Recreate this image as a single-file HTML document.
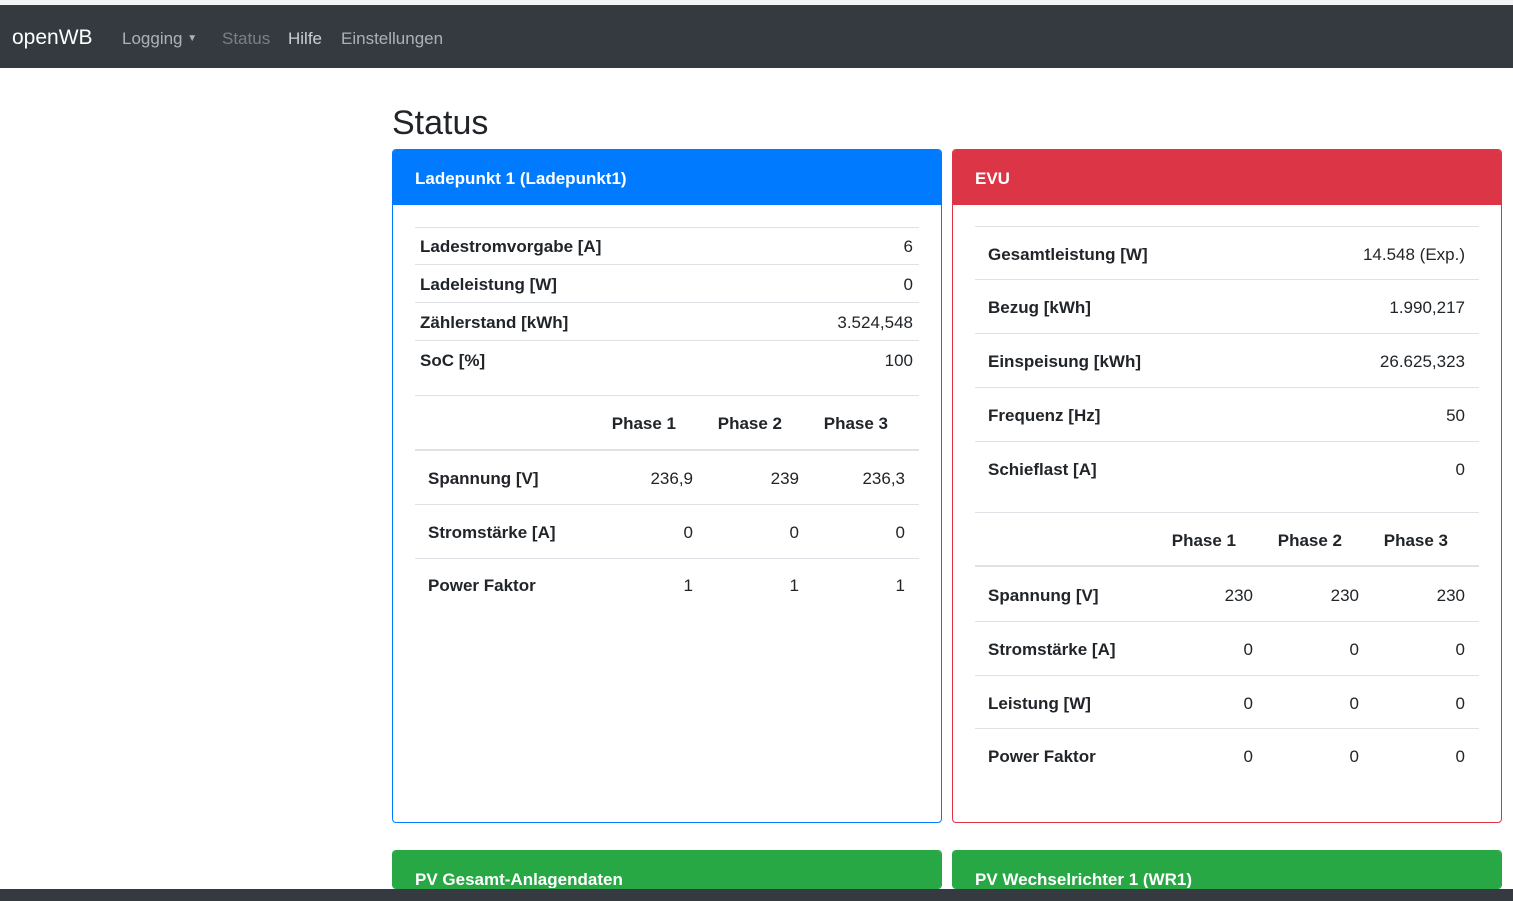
<!DOCTYPE html><html><head><meta charset="utf-8"><style>
*{box-sizing:border-box;margin:0;padding:0}
html,body{width:1513px;height:901px;overflow:hidden}
body{background:#fff;font-family:"Liberation Sans",sans-serif;color:#212529;position:relative;font-size:17px}
.a{position:absolute;white-space:nowrap;margin-top:1px}
.nav{position:absolute;left:0;top:5px;width:1513px;height:63px;background:#343a40}
.card{position:absolute;border:1px solid;border-radius:4px;overflow:hidden}
.hd{position:absolute;left:0;top:0;right:0;height:55px;color:#fff;font-weight:bold;font-size:17px;padding:19px 0 0 22px}
.ln{position:absolute;height:1px;background:#dee2e6}
.b{font-weight:bold}
.r{text-align:right}
</style></head><body>
<div style="position:absolute;left:0;top:0;width:1513px;height:5px;background:#f3f3f5"></div>
<div class="nav">
<span class="a" style="left:12px;top:20px;font-size:21px;color:#fff">openWB</span>
<span class="a" style="left:122px;top:23px;font-size:17px;color:rgba(255,255,255,.6)">Logging <span style="font-size:10px;position:relative;top:-3px">▼</span></span>
<span class="a" style="left:222px;top:23px;font-size:17px;color:rgba(255,255,255,.35)">Status</span>
<span class="a" style="left:288px;top:23px;font-size:17px;color:rgba(255,255,255,.75)">Hilfe</span>
<span class="a" style="left:341px;top:23px;font-size:17px;color:rgba(255,255,255,.6)">Einstellungen</span>
</div>
<span class="a" style="left:392px;top:103px;font-size:34px;font-weight:500">Status</span>

<div class="card" style="left:392px;top:149px;width:550px;height:674px;border-color:#007bff"><div class="hd" style="background:#007bff">Ladepunkt 1 (Ladepunkt1)</div></div>
<div class="card" style="left:952px;top:149px;width:550px;height:674px;border-color:#dc3545"><div class="hd" style="background:#dc3545">EVU</div></div>
<div class="card" style="left:392px;top:850px;width:550px;height:39px;border-color:#28a745"><div class="hd" style="background:#28a745">PV Gesamt-Anlagendaten</div></div>
<div class="card" style="left:952px;top:850px;width:550px;height:39px;border-color:#28a745"><div class="hd" style="background:#28a745">PV Wechselrichter 1 (WR1)</div></div>
<div style="position:absolute;left:0;top:889px;width:1513px;height:12px;background:#343a40"></div>

<div class="ln" style="left:415px;top:227px;width:504px"></div>
<div class="ln" style="left:415px;top:264px;width:504px"></div>
<div class="ln" style="left:415px;top:302px;width:504px"></div>
<div class="ln" style="left:415px;top:340px;width:504px"></div>
<span class="a b" style="left:420px;top:236px">Ladestromvorgabe [A]</span><span class="a r" style="right:600px;top:236px">6</span>
<span class="a b" style="left:420px;top:274px">Ladeleistung [W]</span><span class="a r" style="right:600px;top:274px">0</span>
<span class="a b" style="left:420px;top:312px">Zählerstand [kWh]</span><span class="a r" style="right:600px;top:312px">3.524,548</span>
<span class="a b" style="left:420px;top:350px">SoC [%]</span><span class="a r" style="right:600px;top:350px">100</span>
<div class="ln" style="left:415px;top:395px;width:504px"></div>
<div class="ln" style="left:415px;top:449px;width:504px;height:2px"></div>
<div class="ln" style="left:415px;top:504px;width:504px"></div>
<div class="ln" style="left:415px;top:558px;width:504px"></div>
<span class="a b" style="right:837px;top:413px">Phase 1</span><span class="a b" style="right:731px;top:413px">Phase 2</span><span class="a b" style="right:625px;top:413px">Phase 3</span>
<span class="a b" style="left:428px;top:468px">Spannung [V]</span><span class="a" style="right:820px;top:468px">236,9</span><span class="a" style="right:714px;top:468px">239</span><span class="a" style="right:608px;top:468px">236,3</span>
<span class="a b" style="left:428px;top:522px">Stromstärke [A]</span><span class="a" style="right:820px;top:522px">0</span><span class="a" style="right:714px;top:522px">0</span><span class="a" style="right:608px;top:522px">0</span>
<span class="a b" style="left:428px;top:575px">Power Faktor</span><span class="a" style="right:820px;top:575px">1</span><span class="a" style="right:714px;top:575px">1</span><span class="a" style="right:608px;top:575px">1</span>

<div class="ln" style="left:975px;top:226px;width:504px"></div>
<div class="ln" style="left:975px;top:279px;width:504px"></div>
<div class="ln" style="left:975px;top:333px;width:504px"></div>
<div class="ln" style="left:975px;top:387px;width:504px"></div>
<div class="ln" style="left:975px;top:441px;width:504px"></div>
<span class="a b" style="left:988px;top:244px">Gesamtleistung [W]</span><span class="a" style="right:48px;top:244px">14.548 (Exp.)</span>
<span class="a b" style="left:988px;top:297px">Bezug [kWh]</span><span class="a" style="right:48px;top:297px">1.990,217</span>
<span class="a b" style="left:988px;top:351px">Einspeisung [kWh]</span><span class="a" style="right:48px;top:351px">26.625,323</span>
<span class="a b" style="left:988px;top:405px">Frequenz [Hz]</span><span class="a" style="right:48px;top:405px">50</span>
<span class="a b" style="left:988px;top:459px">Schieflast [A]</span><span class="a" style="right:48px;top:459px">0</span>
<div class="ln" style="left:975px;top:512px;width:504px"></div>
<div class="ln" style="left:975px;top:565px;width:504px;height:2px"></div>
<div class="ln" style="left:975px;top:621px;width:504px"></div>
<div class="ln" style="left:975px;top:675px;width:504px"></div>
<div class="ln" style="left:975px;top:728px;width:504px"></div>
<span class="a b" style="right:277px;top:530px">Phase 1</span><span class="a b" style="right:171px;top:530px">Phase 2</span><span class="a b" style="right:65px;top:530px">Phase 3</span>
<span class="a b" style="left:988px;top:585px">Spannung [V]</span><span class="a" style="right:260px;top:585px">230</span><span class="a" style="right:154px;top:585px">230</span><span class="a" style="right:48px;top:585px">230</span>
<span class="a b" style="left:988px;top:639px">Stromstärke [A]</span><span class="a" style="right:260px;top:639px">0</span><span class="a" style="right:154px;top:639px">0</span><span class="a" style="right:48px;top:639px">0</span>
<span class="a b" style="left:988px;top:693px">Leistung [W]</span><span class="a" style="right:260px;top:693px">0</span><span class="a" style="right:154px;top:693px">0</span><span class="a" style="right:48px;top:693px">0</span>
<span class="a b" style="left:988px;top:746px">Power Faktor</span><span class="a" style="right:260px;top:746px">0</span><span class="a" style="right:154px;top:746px">0</span><span class="a" style="right:48px;top:746px">0</span>
</body></html>
